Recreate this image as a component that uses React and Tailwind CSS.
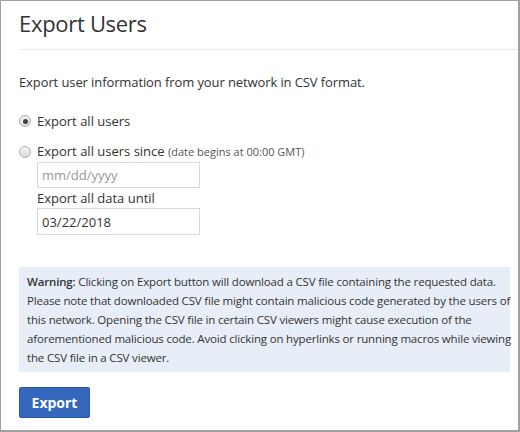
export default function App() {
  return (
    <div className="w-[520px] h-[432px] bg-white overflow-hidden">
      <div className="h-full border-l border-t border-r-2 border-b-2 border-[#a0a0a0] pl-[18px] text-[#333] font-['Open_Sans',sans-serif]">
        <h1 className="pt-[6px] text-[22px] leading-[32px] tracking-[-0.3px] text-[#333]">Export Users</h1>
        <div className="mt-[10px] h-px bg-[#e8e8e8]" />

        <p className="mt-[22px] text-[13px] leading-[20px] tracking-[-0.1px]">
          Export user information from your network in CSV format.
        </p>

        <div className="mt-[19px] flex items-center gap-[6px] text-[13px] leading-[20px]">
          <span className="w-[12px] h-[12px] rounded-full border border-[#b0b0b0] bg-gradient-to-b from-[#f4f4f4] to-[#dcdcdc] flex items-center justify-center">
            <span className="w-[5px] h-[5px] rounded-full bg-[#444]" />
          </span>
          <span>Export all users</span>
        </div>

        <div className="mt-[10px] flex items-center gap-[6px] text-[13px] leading-[20px]">
          <span className="w-[12px] h-[12px] rounded-full border border-[#b0b0b0] bg-gradient-to-b from-[#f4f4f4] to-[#dcdcdc]" />
          <span>
            Export all users since{" "}
            <span className="text-[11px] text-[#555]">(date begins at 00:00 GMT)</span>
          </span>
        </div>

        <div className="ml-[18px] w-[163px]">
          <input
            placeholder="mm/dd/yyyy"
            className="w-full h-[26px] border border-[#d5d9e0] px-[4px] text-[13px] text-[#333] placeholder:text-[#999] outline-none"
          />
          <div className="text-[13px] leading-[20px]">Export all data until</div>
          <input
            defaultValue="03/22/2018"
            className="w-full h-[27px] border border-[#d5d9e0] px-[4px] text-[13px] text-[#333] outline-none"
          />
        </div>

        <div className="mt-[32px] mr-[8px] bg-[#e8eef8] pl-[8px] py-[5px] text-[11.5px] leading-[19px] tracking-[-0.17px] text-[#333]">
          <p className="-mr-[6px]">
            <b className="font-semibold">Warning:</b> Clicking on Export button will download a CSV file containing the requested data. Please note that downloaded CSV file might contain malicious code generated by the users of this network. Opening the CSV file in certain CSV viewers might cause execution of the aforementioned malicious code. Avoid clicking on hyperlinks or running macros while viewing the CSV file in a CSV viewer.
          </p>
        </div>

        <button className="mt-[15px] w-[71px] h-[31px] rounded-[2px] bg-[#3567bd] border border-[#2d5aa8] text-white font-bold text-[14px]">
          Export
        </button>
      </div>
    </div>
  );
}
